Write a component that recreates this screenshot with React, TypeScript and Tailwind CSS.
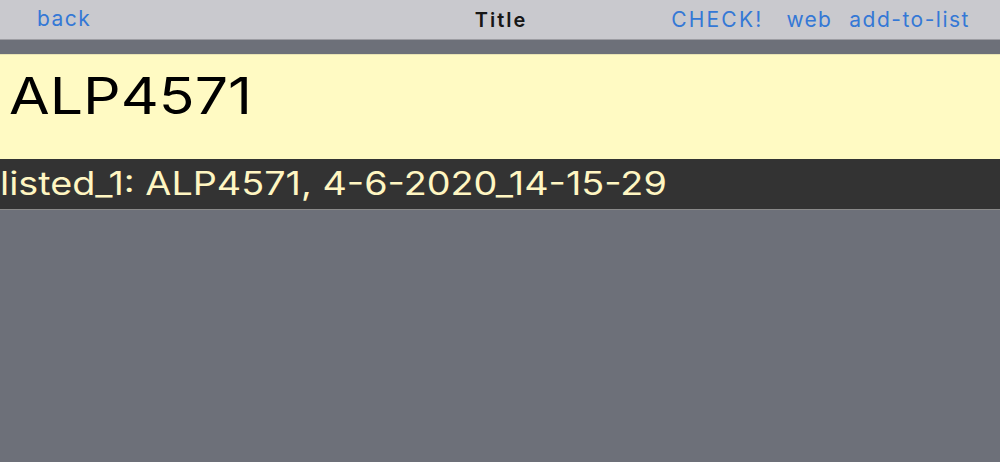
export default function App() {
  return (
    <div className="w-full h-[462px] bg-[#6d7079] overflow-hidden font-['Inter','Noto_Sans',sans-serif]">
      <header className="h-[40px] bg-[#c9c9ce] border-b border-[#9d9da3] grid grid-cols-[1fr_auto_1fr] items-center">
        <div className="pl-[37px]">
          <span className="text-[21px] tracking-[1.5px] text-[#3478d6] leading-none">back</span>
        </div>
        <div className="text-[20px] tracking-[2px] font-semibold text-[#161616] leading-none pl-[2px]">Title</div>
        <div className="flex justify-end items-center pr-[30px] text-[21px] text-[#3478d6] leading-none">
          <span className="tracking-[2.2px]">CHECK!</span>
          <span className="ml-[23px] tracking-[1.3px]">web</span>
          <span className="ml-[17px] tracking-[1.5px]">add-to-list</span>
        </div>
      </header>

      <div className="mt-[14px] h-[105px] bg-[#fffac3] border-t border-[#e8e4b4] pl-[9px] pt-[11px]">
        <span className="inline-block origin-left scale-x-[1.18] text-[50px] leading-[60px] text-black">ALP4571</span>
      </div>

      <div className="h-[51px] bg-[#333333] border-b border-[#8a8a8a] flex items-center">
        <span className="inline-block origin-left scale-x-[1.18] text-[32px] leading-none text-[#fff6c2] whitespace-nowrap">
          listed_1: ALP4571, 4-6-2020_14-15-29
        </span>
      </div>
    </div>
  );
}
